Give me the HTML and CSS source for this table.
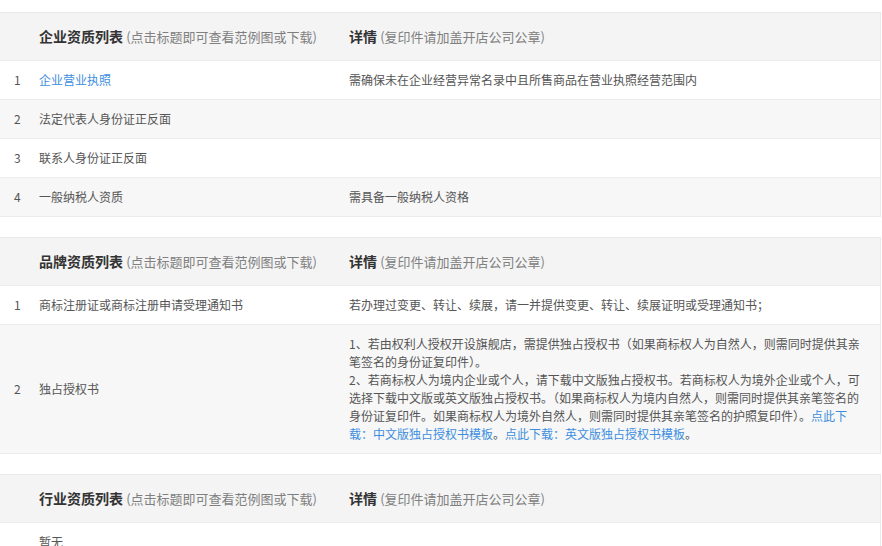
FILE: index.html
```html
<!DOCTYPE html>
<html lang="zh-CN">
<head>
<meta charset="utf-8">
<title>资质列表</title>
<link rel="stylesheet" href="styles.css">
</head>
<body>
<div class="page">
  <table class="qual-table">
    <colgroup><col class="c-idx"><col class="c-name"><col class="c-detail"></colgroup>
    <thead>
      <tr>
        <th></th>
        <th><b>企业资质列表</b> <span class="hint">(点击标题即可查看范例图或下载)</span></th>
        <th><b>详情</b> <span class="hint">(复印件请加盖开店公司公章)</span></th>
      </tr>
    </thead>
    <tbody>
      <tr><td class="idx">1</td><td><a class="link" href="#">企业营业执照</a></td><td class="detail">需确保未在企业经营异常名录中且所售商品在营业执照经营范围内</td></tr>
      <tr><td class="idx">2</td><td>法定代表人身份证正反面</td><td class="detail"></td></tr>
      <tr><td class="idx">3</td><td>联系人身份证正反面</td><td class="detail"></td></tr>
      <tr><td class="idx">4</td><td>一般纳税人资质</td><td class="detail">需具备一般纳税人资格</td></tr>
    </tbody>
  </table>

  <table class="qual-table">
    <colgroup><col class="c-idx"><col class="c-name"><col class="c-detail"></colgroup>
    <thead>
      <tr>
        <th></th>
        <th><b>品牌资质列表</b> <span class="hint">(点击标题即可查看范例图或下载)</span></th>
        <th><b>详情</b> <span class="hint">(复印件请加盖开店公司公章)</span></th>
      </tr>
    </thead>
    <tbody>
      <tr><td class="idx">1</td><td>商标注册证或商标注册申请受理通知书</td><td class="detail">若办理过变更、转让、续展，请一并提供变更、转让、续展证明或受理通知书；</td></tr>
      <tr><td class="idx">2</td><td>独占授权书</td><td class="detail">1、若由权利人授权开设旗舰店，需提供独占授权书（如果商标权人为自然人，则需同时提供其亲笔签名的身份证复印件）。<br>2、若商标权人为境内企业或个人，请下载中文版独占授权书。若商标权人为境外企业或个人，可选择下载中文版或英文版独占授权书。（如果商标权人为境内自然人，则需同时提供其亲笔签名的身份证复印件。如果商标权人为境外自然人，则需同时提供其亲笔签名的护照复印件）。<a class="link" href="#">点此下载：中文版独占授权书模板</a>。<a class="link" href="#">点此下载：英文版独占授权书模板</a>。</td></tr>
    </tbody>
  </table>

  <table class="qual-table">
    <colgroup><col class="c-idx"><col class="c-name"><col class="c-detail"></colgroup>
    <thead>
      <tr>
        <th></th>
        <th><b>行业资质列表</b> <span class="hint">(点击标题即可查看范例图或下载)</span></th>
        <th><b>详情</b> <span class="hint">(复印件请加盖开店公司公章)</span></th>
      </tr>
    </thead>
    <tbody>
      <tr><td class="idx"></td><td>暂无</td><td class="detail"></td></tr>
    </tbody>
  </table>
</div>
</body>
</html>
```

FILE: styles.css
```css
html, body {
  margin: 0;
  padding: 0;
  background: #ffffff;
}

body {
  font-family: "Noto Sans CJK SC", "Microsoft YaHei", sans-serif;
  color: #555555;
}

.page {
  padding-top: 12px;
  width: 881px;
}

.qual-table {
  width: 881px;
  table-layout: fixed;
  border-collapse: separate;
  border-spacing: 0;
  border-top: 1px solid #e9e9e9;
  border-right: 1px solid #e9e9e9;
  margin-bottom: 20px;
}

.c-idx { width: 39px; }
.c-name { width: 310px; }
.c-detail { width: 531px; }

.qual-table th {
  background: #f4f4f4;
  text-align: left;
  font-weight: normal;
  padding: 13px 0;
  line-height: 21px;
  font-size: 14px;
  color: #333333;
  white-space: nowrap;
}

.qual-table th b {
  font-weight: bold;
  color: #333333;
}

.qual-table .hint {
  font-size: 13px;
  color: #808080;
}

.qual-table td {
  font-size: 12px;
  line-height: 18px;
  padding: 10px 0;
  color: #555555;
  border-bottom: 1px solid #ececec;
  vertical-align: middle;
}

.qual-table tbody tr:first-child td {
  border-top: 1px solid #ececec;
}

.qual-table tbody tr:nth-child(even) td {
  background: #f7f7f7;
}

.qual-table td.idx {
  padding-left: 14px;
}

.qual-table td.detail {
  padding-right: 18px;
}

.link {
  color: #3d8ede;
  text-decoration: none;
}
```
